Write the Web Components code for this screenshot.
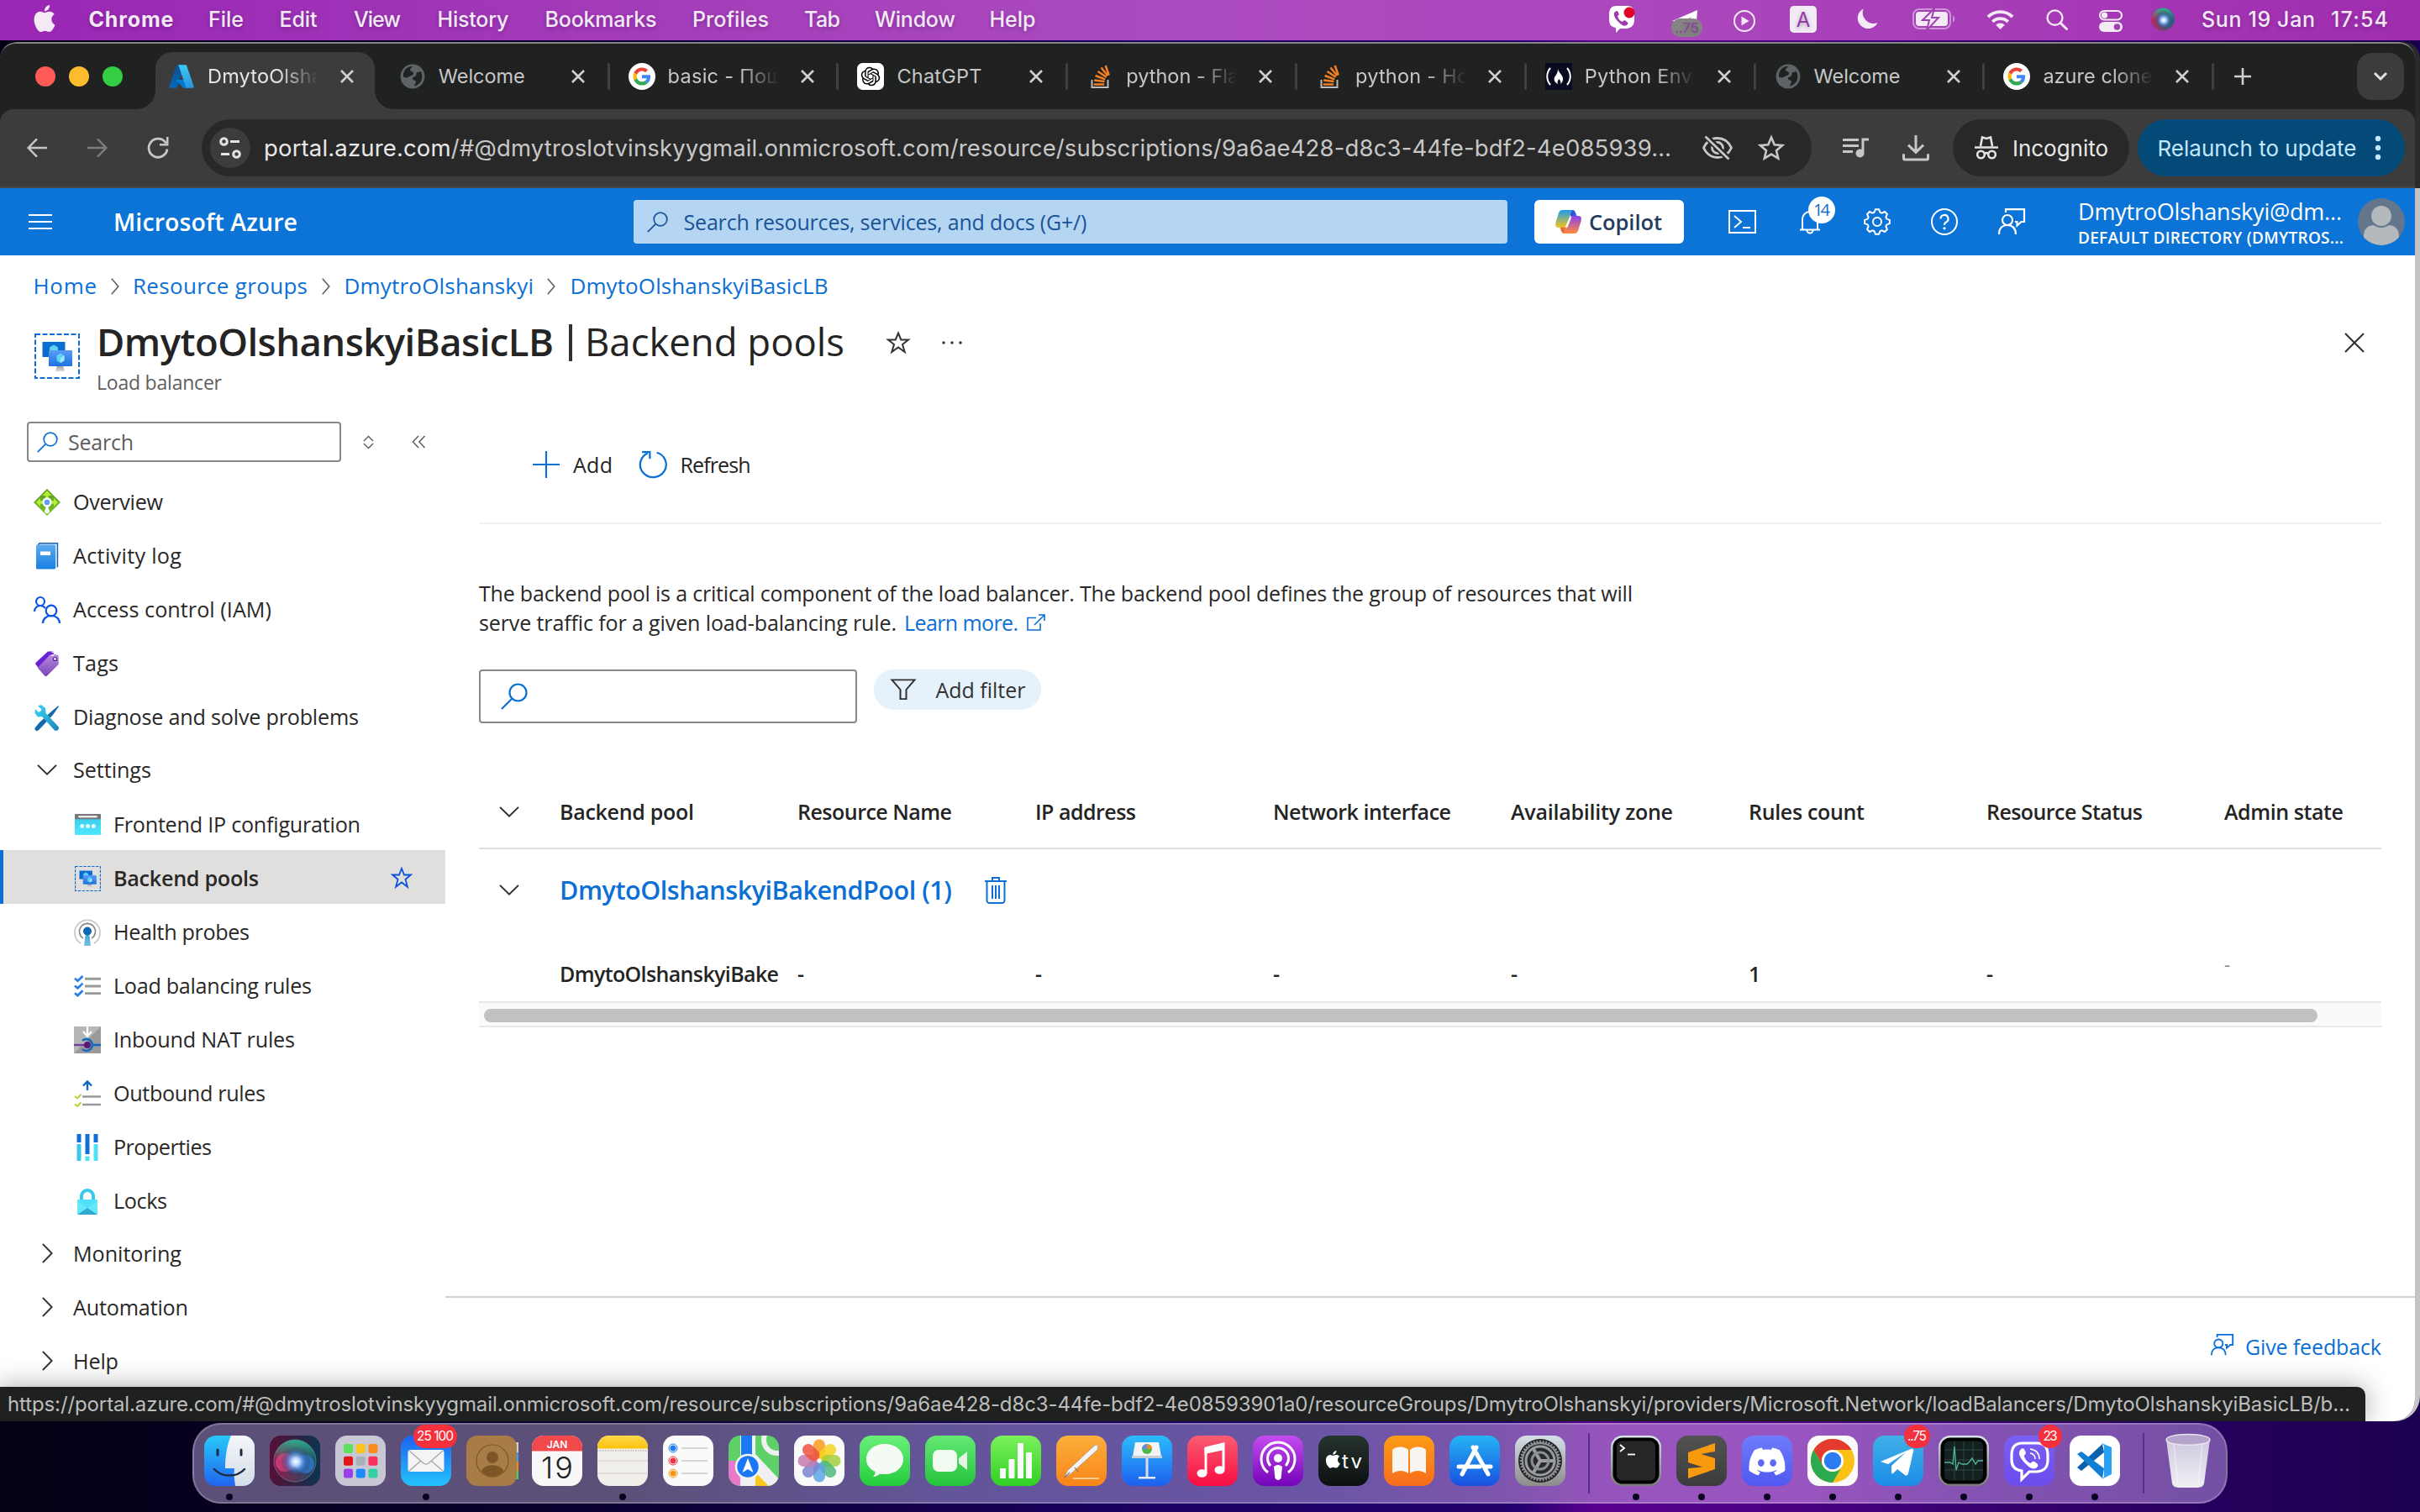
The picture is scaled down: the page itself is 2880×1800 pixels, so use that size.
<!DOCTYPE html>
<html lang="en">
<head>
<meta charset="utf-8">
<title>DmytoOlshanskyiBasicLB - Microsoft Azure</title>
<style>
html,body{margin:0;padding:0;width:2880px;height:1800px;overflow:hidden;background:#14003c}
</style>
</head>
<body>
<mac-desktop></mac-desktop>
<script>
const SANS = '"Open Sans","Noto Sans",sans-serif';
const SYS = 'Inter,Roboto,sans-serif';

/* ---------- helpers ---------- */
const define = (tag, css, html, ready) => customElements.define(tag, class extends HTMLElement {
  constructor() { super(); this.attachShadow({ mode: 'open' }); }
  connectedCallback() {
    this.shadowRoot.innerHTML = `<style>:host{display:block;box-sizing:border-box}*{box-sizing:border-box}${css}</style>` +
      (typeof html === 'function' ? html(this) : html);
    if (ready) ready(this);
  }
});
const T = (text, w, size, extra = '') => `<ui-text w="${w}" size="${size}" style="${extra}">${text}</ui-text>`;
const I = (name, w, h = w, extra = '') => `<ui-icon name="${name}" w="${w}" h="${h}" style="${extra}"></ui-icon>`;
/* lays items out in a flex row; each item is [left, width, markup] */
const row = (start, items) => { let at = start; return items.map(([x, w, m]) => {
  const gap = x - at; at = x + w;
  return `<div style="flex:none;display:flex;align-items:center;justify-content:center;width:${w}px;margin-left:${gap}px">${m}</div>`; }).join(''); };
const cog = (c, ro, ri, n, t = .5) => { let p = []; for (let i = 0; i < n; i++) { const a = i * 2 * Math.PI / n, s = Math.PI / n;
  for (const [r, o] of [[ri, -s * (t + .25)], [ro, -s * t * .7], [ro, s * t * .7], [ri, s * (t + .25)]]) p.push((c + r * Math.sin(a + o)).toFixed(2) + ' ' + (c - r * Math.cos(a + o)).toFixed(2)); }
  return 'M' + p.join('L') + 'Z'; };
const lg = (id, a, b, x2 = 0, y2 = 1) => `<linearGradient id="${id}" x1="0" y1="0" x2="${x2}" y2="${y2}"><stop stop-color="${a}"/><stop offset="1" stop-color="${b}"/></linearGradient>`;
const tile = (a, b, inner) => `<defs>${lg('t', a, b)}</defs><rect width="60" height="60" rx="14" fill="url(#t)"/>${inner}`;

/* ---------- icon library: [viewBox, markup] ---------- */
const APPLE = 'M12.152 6.896c-.948 0-2.415-1.078-3.96-1.04-2.04.027-3.91 1.183-4.961 3.014-2.117 3.675-.546 9.103 1.519 12.09 1.013 1.454 2.208 3.09 3.792 3.039 1.52-.065 2.09-.987 3.935-.987 1.831 0 2.35.987 3.96.948 1.637-.026 2.676-1.48 3.676-2.948 1.156-1.688 1.636-3.325 1.662-3.415-.039-.013-3.182-1.221-3.22-4.857-.026-3.04 2.48-4.494 2.597-4.559-1.429-2.09-3.623-2.324-4.39-2.376-2-.156-3.675 1.09-4.61 1.09zM15.53 3.83c.843-1.012 1.4-2.427 1.245-3.83-1.207.052-2.662.805-3.532 1.818-.78.896-1.454 2.338-1.273 3.714 1.338.104 2.715-.688 3.559-1.701';
const PHONE = 'M9 8c2-2 3-1 4 1s1 3-1 4c1 4 3 6 6 7 1-2 3-2 4-1 3 2 3 3 1 5-3 2-6 0-10-4S6 11 9 8z';
const siri = r => `<defs><radialGradient id="a" cx=".5" cy=".5" r=".5"><stop stop-color="#fff"/><stop offset=".25" stop-color="#b7d8ff"/><stop offset=".6" stop-color="#3a7bd0" stop-opacity=".6"/><stop offset="1" stop-color="#223" stop-opacity="0"/></radialGradient>${lg('b', '#d3245c', '#1b6f7c', 1, 0)}<linearGradient id="c" x1="0" y1="0" x2="0" y2="1"><stop stop-color="#20c997" stop-opacity=".8"/><stop offset=".5" stop-color="#20c997" stop-opacity="0"/></linearGradient></defs>`;
const ICONS = {
  apple: ['1 0 22 24', `<path fill="#f3eaf6" d="${APPLE}"/>`],
  mviber: ['0 0 32 32', `<path fill="#fff" d="M10 0h12c6 0 9 3 9 10v6c0 7-3 10-9 11h-8l-5 5v-6c-6-1-8-4-8-10v-6C1 3 4 0 10 0z"/><path fill="#a03ab0" d="${PHONE}" transform="translate(-1 -1)"/><circle cx="25" cy="8" r="6.5" fill="#e00028"/>`],
  mtg: ['0 0 38 34', `<path fill="#fff" d="M1 14 31 1l-1 14H18l6-6-12 7z"/><rect x="0" y="11" width="37" height="22" rx="11" fill="#858585"/><text x="18.5" y="28" text-anchor="middle" font-family="Inter" font-size="16.500" fill="#8c3f9c">..75</text>`],
  mplay: ['0 0 26 26', `<circle cx="13" cy="13" r="12" fill="none" stroke="#f3eaf6" stroke-width="2"/><path d="M9.500 7.500v11l9-5.500z" fill="#f3eaf6"/>`],
  minput: ['0 0 32 32', `<rect width="32" height="32" rx="5" fill="#f3eaf6"/><text x="16" y="24.500" text-anchor="middle" font-family="Inter" font-size="24" fill="#923aa5">A</text>`],
  mmoon: ['0 0 26 26', `<path fill="#f3eaf6" d="M8.500.5A12.500 12.500 0 1 0 25.500 17 13 13 0 0 1 8.500.5z"/>`],
  mbattery: ['0 0 52 26', `<rect x="1" y="1" width="44" height="23" rx="7" fill="none" stroke="#f3eaf6" stroke-opacity=".5" stroke-width="2"/><rect x="4" y="4" width="38" height="17" rx="4" fill="#f3eaf6"/><path d="M48 8.500c3 1 3 7 0 8z" fill="#f3eaf6" fill-opacity=".5"/><path d="M26 0 12 14h8l-3 12 14-15h-8z" fill="#f3eaf6" stroke="#a33fb5" stroke-width="2"/>`],
  mwifi: ['0 0 34 25', `<g fill="none" stroke="#f3eaf6" stroke-width="4"><path d="M2 9.500a21 21 0 0 1 30 0"/><path d="M7.500 15.500a13.500 13.500 0 0 1 19 0"/></g><path d="M11.500 19.500a8 8 0 0 1 11 0L17 25z" fill="#f3eaf6"/>`],
  msearch: ['0 0 26 26', `<circle cx="10.500" cy="10.500" r="9" fill="none" stroke="#f3eaf6" stroke-width="2.400"/><path d="m17 17 7.500 7.500" stroke="#f3eaf6" stroke-width="3" stroke-linecap="round"/>`],
  mcontrol: ['0 0 28 26', `<rect x="1" y="1" width="26" height="10.500" rx="5.200" fill="none" stroke="#f3eaf6" stroke-width="2"/><circle cx="6.500" cy="6.200" r="3.600" fill="#f3eaf6"/><rect y="14" width="28" height="12" rx="6" fill="#f3eaf6"/><circle cx="21.500" cy="20" r="3.800" fill="#a33fb5"/>`],
  msiri: ['0 0 28 28', siri() + `<circle cx="14" cy="14" r="13.500" fill="#2a3a6a"/><circle cx="14" cy="14" r="13.500" fill="url(#b)" opacity=".9"/><circle cx="14" cy="14" r="13.500" fill="url(#c)"/><circle cx="15" cy="15" r="11" fill="url(#a)"/>`],

  azure: ['0 0 96 96', `<defs>${lg('a', '#114a8b', '#0669bc')}${lg('b', '#3ccbf4', '#2892df')}</defs><path fill="url(#a)" d="M33.300 6.500h26L32.300 86.500a4 4 0 0 1-4 3H8A4 4 0 0 1 4.200 84L29.400 9.300a4 4 0 0 1 4-2.800z"/><path fill="#0078d4" d="M71.200 60.300H29.900a2 2 0 0 0-1.300 3.300l26.600 24.800a4 4 0 0 0 2.800 1.100h23.400z"/><path fill="url(#b)" d="M66.600 9.400a4 4 0 0 0-4-2.800h-29a4 4 0 0 1 4 2.800L62.800 84a4 4 0 0 1-4 5.500h29a4 4 0 0 0 4-5.500z"/>`],
  globe: ['0 0 30 30', `<circle cx="15" cy="15" r="14.500" fill="#5f6368"/><path fill="#202221" d="M5 9c2-4 6-6 10-6-1 2-3 2-3 4 0 3 4 1 4 4s-3 3-5 4-2 2-6 1C3 15 4 11 5 9zm16 1c2 0 3-1 4-1 2 4 2 8 0 12-2 3-5 5-8 5.500 0-2 2-3 2-5 0-3-4-1-4-4 0-2 3-2 4-3.500s0-4 2-4z"/>`],
  google: ['-16 -16 80 80', `<circle cx="24" cy="24" r="40" fill="#fff"/><g transform="translate(-2.500 -2.500) scale(1.100)"><path fill="#EA4335" d="M24 9.500c3.540 0 6.710 1.220 9.210 3.600l6.850-6.850C35.900 2.380 30.470 0 24 0 14.620 0 6.510 5.380 2.560 13.220l7.980 6.190C12.430 13.720 17.740 9.500 24 9.500z"/><path fill="#4285F4" d="M46.980 24.550c0-1.570-.15-3.090-.38-4.550H24v9.020h12.940c-.58 2.960-2.260 5.480-4.780 7.180l7.730 6c4.510-4.180 7.090-10.360 7.090-17.650z"/><path fill="#FBBC05" d="M10.530 28.590c-.48-1.450-.76-2.990-.76-4.590s.27-3.140.76-4.590l-7.980-6.190C.92 16.460 0 20.120 0 24c0 3.880.92 7.540 2.560 10.780l7.970-6.190z"/><path fill="#34A853" d="M24 48c6.480 0 11.930-2.130 15.890-5.810l-7.730-6c-2.150 1.450-4.920 2.300-8.160 2.300-6.260 0-11.570-4.220-13.470-9.910l-7.980 6.190C6.510 42.620 14.620 48 24 48z"/></g>`],
  gpt: ['-5 -5 34 34', `<rect x="-5" y="-5" width="34" height="34" rx="7" fill="#fff"/><path d="M22.2819 9.8211a5.9847 5.9847 0 0 0-.5157-4.9108 6.0462 6.0462 0 0 0-6.5098-2.9A6.0651 6.0651 0 0 0 4.9807 4.1818a5.9847 5.9847 0 0 0-3.9977 2.9 6.0462 6.0462 0 0 0 .7427 7.0966 5.98 5.98 0 0 0 .511 4.9107 6.051 6.051 0 0 0 6.5146 2.9001A5.9847 5.9847 0 0 0 13.2599 24a6.0557 6.0557 0 0 0 5.7718-4.2058 5.9894 5.9894 0 0 0 3.9977-2.9001 6.0557 6.0557 0 0 0-.7475-7.0729zm-9.022 12.6081a4.4755 4.4755 0 0 1-2.8764-1.0408l.1419-.0804 4.7783-2.7582a.7948.7948 0 0 0 .3927-.6813v-6.7369l2.02 1.1686a.071.071 0 0 1 .038.052v5.5826a4.504 4.504 0 0 1-4.4945 4.4944zm-9.6607-4.1254a4.4708 4.4708 0 0 1-.5346-3.0137l.142.0852 4.783 2.7582a.7712.7712 0 0 0 .7806 0l5.8428-3.3685v2.3324a.0804.0804 0 0 1-.0332.0615L9.74 19.9502a4.4992 4.4992 0 0 1-6.1408-1.6464zM2.3408 7.8956a4.485 4.485 0 0 1 2.3655-1.9728V11.6a.7664.7664 0 0 0 .3879.6765l5.8144 3.3543-2.0201 1.1685a.0757.0757 0 0 1-.071 0l-4.8303-2.7865A4.504 4.504 0 0 1 2.3408 7.872zm16.5963 3.8558L13.1038 8.364 15.1192 7.2a.0757.0757 0 0 1 .071 0l4.8303 2.7913a4.4944 4.4944 0 0 1-.6765 8.1042v-5.6772a.79.79 0 0 0-.407-.667zm2.0107-3.0231l-.142-.0852-4.7735-2.7818a.7759.7759 0 0 0-.7854 0L9.409 9.2297V6.8974a.0662.0662 0 0 1 .0284-.0615l4.8303-2.7866a4.4992 4.4992 0 0 1 6.6802 4.66zM8.3065 12.863l-2.02-1.1638a.0804.0804 0 0 1-.038-.0567V6.0742a4.4992 4.4992 0 0 1 7.3757-3.4537l-.142.0805L8.704 5.459a.7948.7948 0 0 0-.3927.6813zm1.0976-2.3654l2.602-1.4998 2.6069 1.4998v2.9994l-2.5974 1.4997-2.6067-1.4997Z"/>`],
  stack: ['0 0 32 32', `<path d="M6.500 20v9h19v-9" fill="none" stroke="#bcbbbb" stroke-width="2"/><g stroke="#f48024" stroke-width="2.500"><path d="M9.500 25.500h12.500M10 20.500l12.300 1.500M11.400 15l11.600 4.300M14.300 10l10.200 6.800M18.300 5.500l7.700 9.500M23.500 3l4 11.500" transform="translate(-.8 0)"/></g>`],
  fcc: ['0 0 32 32', `<rect width="32" height="32" fill="#0a0a23"/><g fill="none" stroke="#fff" stroke-width="2"><path d="M6 6c-5 6-5 14 0 20M26 6c5 6 5 14 0 20"/></g><path fill="#fff" d="M15 7c1 5 7 8 6 13-.5 3-2 4-3 5 1-3 0-4-2-6-1 3-2 3-1 6-4-2-5-5-4-8 1-2 4-4 4-10z"/>`],
  close: ['0 0 18 18', `<path d="m2 2 14 14M16 2 2 16" stroke="currentColor" stroke-width="2.600"/>`],
  plus: ['0 0 20 20', `<path d="M10 0v20M0 10h20" stroke="currentColor" stroke-width="2.600"/>`],
  down: ['0 0 16 10', `<path d="m1 1 7 7 7-7" fill="none" stroke="currentColor" stroke-width="3"/>`],
  back: ['0 0 26 26', `<path d="M13 1.500 1.800 13 13 24.500M2 13h24" fill="none" stroke="currentColor" stroke-width="2.600"/>`],
  fwd: ['0 0 26 26', `<path d="M13 1.500 24.200 13 13 24.500M24 13H0" fill="none" stroke="currentColor" stroke-width="2.600"/>`],
  reload: ['0 0 26 26', `<path d="M22.500 7.500A11 11 0 1 0 24 14.500" fill="none" stroke="currentColor" stroke-width="2.800"/><path d="M25.500 0v10.500H15V8h8V0z" fill="currentColor"/>`],
  tune: ['0 0 26 26', `<g fill="none" stroke="#e3e3e3" stroke-width="3"><circle cx="5.500" cy="5.500" r="3.800"/><path d="M13 5.500h11M2 20.500h10"/><circle cx="20.500" cy="20.500" r="3.800"/></g>`],
  eyeoff: ['0 0 38 30', `<g fill="none" stroke="currentColor" stroke-width="2.800"><path d="M2.500 15C6 7.500 12 3.500 19 3.500S32 7.500 35.500 15C32 22.500 26 26.500 19 26.500S6 22.500 2.500 15z"/><circle cx="19" cy="15" r="6.500"/></g><path d="M5 1 33 29" stroke="#282828" stroke-width="7"/><path d="m4.500 1.500 28 27" stroke="currentColor" stroke-width="2.800"/>`],
  bmstar: ['0 0 32 32', `<path d="m16 3.500 3.700 8.800 9.500.8-7.200 6.200 2.200 9.300-8.200-5-8.200 5L10 19.300l-7.200-6.200 9.500-.8z" fill="none" stroke="currentColor" stroke-width="2.600"/>`],
  queue: ['0 0 31 24', `<path d="M0 2.500h19M0 9.500h19M0 16.500h12" stroke="currentColor" stroke-width="2.800"/><path d="M24 18V2h7" fill="none" stroke="currentColor" stroke-width="3"/><circle cx="20.500" cy="18.500" r="5" fill="currentColor"/>`],
  download: ['0 0 32 32', `<path d="M16 0v20M7 12l9 9 9-9" fill="none" stroke="currentColor" stroke-width="3"/><path d="M1.500 23v5a2 2 0 0 0 2 2h25a2 2 0 0 0 2-2v-5" fill="none" stroke="currentColor" stroke-width="3"/>`],
  incognito: ['0 0 28 28', `<g fill="none" stroke="#e3e3e3" stroke-width="2.600"><path d="M7 12 9 1.500l5 1.500 5-1.500L21 12M0 13.500h28"/><circle cx="7.500" cy="22" r="4.300"/><circle cx="20.500" cy="22" r="4.300"/><path d="M11.500 21c1.500-1 3.500-1 5 0"/></g>`],
  dots: ['0 0 8 30', `<g fill="#c2e7ff"><circle cx="4" cy="4" r="3.200"/><circle cx="4" cy="15" r="3.200"/><circle cx="4" cy="26" r="3.200"/></g>`],

  burger: ['0 0 28 18', `<path d="M0 1h28M0 9h28M0 17h28" stroke="#fff" stroke-width="2"/>`],
  search: ['0 0 32 32', `<circle cx="20.500" cy="11.500" r="10" fill="none" stroke="currentColor" stroke-width="2.200"/><path d="M13.500 18.500 1 31" stroke="currentColor" stroke-width="2.200"/>`],
  copilot: ['0 0 32 30', `<defs>${lg('a', '#1a9bf0', '#f5c518')}${lg('b', '#8a3ff0', '#ff8a3a')}${lg('c', '#1d3fd6', '#3b63e8', 1, 0)}${lg('d', '#e8522e', '#f7a04a', 1, 0)}</defs><path fill="url(#c)" d="M16 0h5c2 0 3 1 4 4l1.500 4H19z"/><path fill="url(#a)" d="M9 0h13c-2 1-2.600 3-3.200 5l-4 13c-.8 3-2 4.500-5 4.500H4c-4 0-4.500-3-3.500-7L4 4c1-3 2.500-4 5-4z"/><path fill="url(#d)" d="M16 30h-5c-2 0-3-1-4-4l-1-3.500 7-1z"/><path fill="url(#b)" d="M23 30H10c2-1 2.600-3 3.200-5l4-13c.8-3 2-4.500 5-4.500H28c4 0 4.500 3 3.500 7L28 26c-1 3-2.500 4-5 4z"/><path fill="#fff" d="M17.500 9h2.500l-5 13h-3z" opacity=".9"/>`],
  shell: ['0 0 33 28', `<rect x="1" y="1" width="31" height="26" fill="none" stroke="#fff" stroke-width="2"/><path d="m7 7 8 7-8 7M17 21h9" fill="none" stroke="#fff" stroke-width="2"/>`],
  bell: ['0 0 26 28', `<path d="M1 23.500h24M4 23.500V11a9 9 0 0 1 18 0v12.500M9.500 24a3.500 3.500 0 0 0 7 0" fill="none" stroke="#fff" stroke-width="2"/>`],
  gear: ['0 0 32 32', `<path d="${cog(16, 15, 11.800, 8)}" fill="none" stroke="#fff" stroke-width="2"/><circle cx="16" cy="16" r="5" fill="none" stroke="#fff" stroke-width="2"/>`],
  help: ['0 0 32 32', `<circle cx="16" cy="16" r="15" fill="none" stroke="#fff" stroke-width="2"/><path d="M11.500 12.500a4.500 4.500 0 1 1 6.500 4c-1.600.8-2 1.700-2 3.500" fill="none" stroke="#fff" stroke-width="2.200"/><circle cx="16" cy="23.800" r="1.600" fill="#fff"/>`],
  feedback: ['0 0 32 32', `<g fill="none" stroke="currentColor" stroke-width="2.200"><circle cx="11" cy="14" r="6"/><path d="M1 31c0-7 4-11 10-11s10 4 10 11"/><path d="M9 5V1.200h22V16h-3.500L22.500 20.500V16H20"/></g>`],
  avatar: ['0 0 56 56', `<defs><clipPath id="c"><circle cx="28" cy="28" r="28"/></clipPath></defs><g clip-path="url(#c)"><rect width="56" height="56" fill="#64768c"/><circle cx="28" cy="21" r="12" fill="#b4b9be"/><path d="M7 58V45c0-8 5-13 12-13 5 4 13 4 18 0 7 0 12 5 12 13v13z" fill="#b4b9be"/></g>`],

  crumb: ['0 0 10 20', `<path d="m.8.8 8 9.200-8 9.200" fill="none" stroke="#605e5c" stroke-width="1.600"/>`],
  chevR: ['0 0 14 24', `<path d="m1 1 11.500 11L1 23" fill="none" stroke="#323130" stroke-width="2"/>`],
  chevD: ['0 0 24 14', `<path d="m1 1 11 11.500L23 1" fill="none" stroke="#323130" stroke-width="2"/>`],
  favstar: ['0 0 28 28', `<path d="m14 2.500 3.300 8h8.700l-7 5.500 2.700 9-7.700-5.500L6.300 25 9 16l-7-5.500h8.700z" fill="none" stroke="currentColor" stroke-width="2"/>`],
  more: ['0 0 24 6', `<g fill="#323130"><circle cx="2" cy="3" r="1.700"/><circle cx="12" cy="3" r="1.700"/><circle cx="22" cy="3" r="1.700"/></g>`],
  x: ['0 0 24 24', `<path d="m1 1 22 22M23 1 1 23" stroke="#323130" stroke-width="2"/>`],
  sort: ['0 0 14 18', `<path d="m1 7.500 6-6 6 6M1 10.500l6 6 6-6" fill="none" stroke="#605e5c" stroke-width="1.500"/>`],
  collapse: ['0 0 18 16', `<path d="M8.500 1 1.500 8l7 7M16.500 1l-7 7 7 7" fill="none" stroke="#605e5c" stroke-width="1.600"/>`],
  add: ['0 0 32 32', `<path d="M16 0v32M0 16h32" stroke="#0b6fd6" stroke-width="2.200"/>`],
  refresh: ['0 0 32 32', `<path d="M20 1.700A15 15 0 1 1 9.500 2.500" fill="none" stroke="#0b6fd6" stroke-width="2.200"/><path d="M3 1.200h9v8" fill="none" stroke="#0b6fd6" stroke-width="2.200"/>`],
  ext: ['0 0 22 20', `<path d="M11 4.500H1V19h15V11M14 1h7v7M21 1 9 13" fill="none" stroke="#0b6fd6" stroke-width="1.600"/>`],
  filter: ['0 0 30 28', `<path d="M1.500 1.500h27l-10 12.500v12h-7V14z" fill="none" stroke="#323130" stroke-width="2"/>`],
  trash: ['0 0 26 32', `<path d="M0 5h26M9 5V1h8v4M2.500 5v23a3 3 0 0 0 3 3h15a3 3 0 0 0 3-3V5M9 10v16M13 10v16M17 10v16" fill="none" stroke="#0b6fd6" stroke-width="2"/>`],

  pool: ['0 0 54 54', `<defs>${lg('a', '#0b6fd6', '#0a67cc')}${lg('b', '#5a9cf5', '#1d72e2')}${lg('s', '#9a9a9a', '#dcdcdc')}</defs><rect x="1" y="1" width="52" height="52" fill="none" stroke="#0b6fd6" stroke-width="2" stroke-dasharray="6 2.500"/><rect x="9.500" y="10" width="27" height="18" fill="url(#a)"/><path d="m23 13.500 5 3V20h-5v5l-5-3v-5.500z" fill="#5fd3f3"/><path d="M27 38h7l2 7H25z" fill="url(#s)"/><rect x="17" y="20" width="28" height="19" rx="1" fill="url(#b)"/><path d="m31 23.500 4.500 2.700v6L31 35l-4.500-2.800v-6z" fill="#5fd3f3"/><path d="m31 29.500 4.500-3v5.700L31 35z" fill="#9febff"/>`],
  overview: ['0 0 32 32', `<defs>${lg('a', '#5a9a20', '#7cc22c')}</defs><path d="M16 0 32 16 16 32 0 16z" fill="url(#a)"/><g fill="#b4ec36"><path d="m16 2 5.500 6h-3.800v5h-3.400V8h-3.800zM3 16l5-5v3.300h4v3.400H8V21zM29 16l-5-5v3.300h-4v3.400h4V21z"/></g><path d="M14.300 20h3.400v4a3 3 0 1 1-3.400 0z" fill="#fff"/><circle cx="16" cy="16" r="4.500" fill="#5ea0ef" stroke="#fff" stroke-width="2.400"/>`],
  activity: ['0 0 32 32', `<defs>${lg('a', '#5aacf0', '#1a7fe0')}</defs><path d="M6 2.500 8 1h20.500v28l-2 2H6z" fill="#cfe6f8"/><path d="M5 3 7 .8h21.500v28.500" fill="none" stroke="#1a5fa8" stroke-width="1.400"/><rect x="3" y="2.500" width="23" height="29" rx="1.500" fill="url(#a)"/><rect x="8" y="10.500" width="12" height="4.500" fill="#fff"/>`],
  iam: ['0 0 32 32', `<g fill="none" stroke="#0a55e0" stroke-width="2.200"><circle cx="8" cy="6" r="5"/><path d="M1 18c0-4 3-7 7-7 3 0 4.500 1 6 3"/><circle cx="21" cy="17" r="6.300"/><path d="M11 32c0-5 4-9 10-9s10 4 10 9"/></g>`],
  tags: ['0 0 32 32', `<defs>${lg('a', '#b98ae0', '#7a45b5')}</defs><path d="M17 1.500h6.500L26 6v6L8 24 2.500 17c-.6-1 0-2 .5-2.500z" fill="#6b20d8"/><path d="M19.500 5.500h8.200c1.200 0 2 .8 2 2v9.500L16 30.500c-1 1-2 1-2.800 0L6 22.500c-1-1-.8-2 0-2.800z" fill="url(#a)"/><circle cx="25.500" cy="10.500" r="2" fill="#fff" stroke="#4a1a90" stroke-width="1.200"/><path d="M21.500 2.500a2 2 0 1 1-.5 3" fill="none" stroke="#fff" stroke-width="1.300"/>`],
  diagnose: ['0 0 32 32', `<defs>${lg('a', '#3cd4f4', '#1a86b8', 1, 1)}</defs><path d="m29.500 2 .5 1-7 10-12 13-5 5a2.300 2.300 0 0 1-4-3l5-6L20 10z" fill="#1569ae"/><path d="M5 2.500 9 1l5 4 .5 6L29 26.500a3 3 0 0 1-4.500 4.500L10 15l-5 .5L1.500 11l.5-5 4 4 3.500-2.500L9 6z" fill="url(#a)"/>`],
  frontend: ['0 0 32 26', `<defs>${lg('a', '#35c8e8', '#50e6ff')}</defs><rect width="32" height="26" rx="1" fill="url(#a)"/><rect width="32" height="6.500" rx="1" fill="#767676"/><rect x="4.500" y="2.200" width="23" height="2.300" fill="#f2f2f2"/><g fill="#e8fbff"><circle cx="9" cy="15" r="2.600"/><circle cx="16" cy="15" r="2.600"/><circle cx="23" cy="15" r="2.600"/></g>`],
  probes: ['0 0 32 32', `<defs>${lg('a', '#3a9fd8', '#76c0e0')}</defs><path d="M14 16h4l2 16h-8z" fill="url(#a)"/><g fill="none" stroke-width="1.700"><path d="M8 29A15 15 0 1 1 24 29" stroke="#c8c8c8"/><path d="M11 23a9.500 9.500 0 1 1 10 0" stroke="#8a8a8a"/></g><circle cx="16" cy="14.500" r="5" fill="#1068b8"/>`],
  lbrules: ['0 0 32 28', `<g fill="none" stroke-width="2.800"><path d="m1 5 3.500 3L10.500 2M1 14l3.500 3 6-6M1 23l3.500 3 6-6" stroke="#2d7fe8"/><path d="M13 5.500h19M13 14.500h19M13 23.500h19" stroke="#9a9a9a" stroke-width="3"/></g>`],
  nat: ['0 0 32 32', `<path d="M0 0h32v32H0z" fill="#98999b"/><path d="M0 0h32L0 32z" fill="#b5b6b8"/><path d="M16 0v11M11 6l5 5.500L21 6" fill="none" stroke="#fff" stroke-width="2.200"/><path d="M0 22h14" stroke="#7a3a9a" stroke-width="2.400"/><path d="M10 27a7 7 0 1 0 0-10M23 22h9" fill="none" stroke="#1068c0" stroke-width="2.400"/><circle cx="16" cy="22" r="4" fill="#5a1a7a"/>`],
  outbound: ['0 0 32 32', `<path d="M16 12V2M11 6.500 16 1.500l5 5" fill="none" stroke="#1068c0" stroke-width="2.400"/><path d="m1 19 3 2.500L8.500 17M1 28.500 4 31l4.500-4.500" fill="none" stroke="#b4d334" stroke-width="2"/><path d="M10 19.500h22M10 29h22" stroke="#9a9a9a" stroke-width="2.400"/>`],
  props: ['0 0 32 32', `<g><rect x="3.500" y="0" width="5" height="10" fill="#1070d8"/><rect x="3.500" y="12" width="5" height="20" fill="#40c8e8"/><rect x="13.500" y="0" width="5" height="24" fill="#1070d8"/><rect x="13.500" y="26.500" width="5" height="5.500" fill="#50e0f8"/><rect x="23.500" y="0" width="5" height="10" fill="#1070d8"/><rect x="23.500" y="12" width="5" height="20" fill="#50e0f8"/></g>`],
  lock: ['0 0 32 32', `<path d="M9 16V10a7 7 0 0 1 14 0v6" fill="none" stroke="#38c8ec" stroke-width="4"/><rect x="4" y="14" width="24" height="18" rx="1.500" fill="#50e0f8"/><path d="m4 15 12 9L4 32zM28 15l-12 9 12 8z" fill="#66e8fb"/><path d="m4 32 12-8 12 8z" fill="#30a8d0"/>`],

  finder: ['0 0 60 60', `<defs>${lg('a', '#28c8fa', '#1f66f0')}${lg('b', '#f4f6fa', '#d4dde8')}<clipPath id="c"><rect width="60" height="60" rx="14"/></clipPath></defs><g clip-path="url(#c)"><rect width="60" height="60" fill="url(#a)"/><path d="M32 0h28v60H37c-1-7-2-14-1-21h-11c0-14 2-28 7-39z" fill="url(#b)"/></g><path d="M16 17v6M44 17v6" stroke="#1d2c45" stroke-width="3" stroke-linecap="round"/><path d="M12 40c9 10 27 10 36 0" fill="none" stroke="#1d2c45" stroke-width="2.400" stroke-linecap="round"/>`],
  siri: ['0 0 60 60', siri() + `<defs>${lg('k', '#6a0a3a', '#0a3a5a', 1, 0)}</defs><rect width="60" height="60" rx="14" fill="#10202c"/><rect width="60" height="60" rx="14" fill="url(#k)" opacity=".8"/><circle cx="30" cy="30" r="25" fill="url(#b)" opacity=".5" stroke="#9aa8b8" stroke-width="1"/><circle cx="30" cy="30" r="25" fill="url(#c)"/><circle cx="18" cy="32" r="11" fill="#f04a90" opacity=".6"/><circle cx="42" cy="34" r="11" fill="#2f8af0" opacity=".6"/><circle cx="31" cy="31" r="18" fill="url(#a)"/>`],
  launchpad: ['0 0 60 60', `<rect width="60" height="60" rx="14" fill="#c8c8d4"/>` + ['#5fe05a', '#fbc41c', '#fb8c1c', '#e2141c', '#a8b0b8', '#fb2f5c', '#9a3fe8', '#1c8afb', '#35cfa4'].map((c, i) => `<rect x="${10 + (i % 3) * 14.700}" y="${10 + Math.floor(i / 3) * 14.700}" width="11" height="11" rx="2.500" fill="${c}"/>`).join('')],
  mail: ['0 0 60 60', tile('#1e62f2', '#24c2fb', `<rect x="8.500" y="17" width="43" height="26" rx="3" fill="#f4f4f4"/><path d="m10 18 17 15q3 2 6 0l17-15M10 42l14-12M50 42 36 30" fill="none" stroke="#a8a8a8" stroke-width="1.400"/>`)],
  contacts: ['0 0 60 60', `<rect x="48" y="8" width="14" height="12" fill="#cfcfcf"/><rect x="48" y="20" width="14" height="11" fill="#3aa0f0"/><rect x="48" y="31" width="14" height="11" fill="#f08a1c"/><rect x="48" y="42" width="14" height="10" fill="#4cd05c"/><rect width="60" height="60" rx="13" fill="#a87c46"/><circle cx="31" cy="30" r="19" fill="none" stroke="#7c5626" stroke-width="1.200"/><circle cx="31" cy="26" r="7" fill="#7c5626"/><path d="M18 42c3-9 23-9 26 0-7 9-19 9-26 0z" fill="#7c5626"/>`],
  calendar: ['0 0 60 60', `<defs><clipPath id="c"><rect width="60" height="60" rx="14"/></clipPath></defs><g clip-path="url(#c)"><rect width="60" height="60" fill="#f8f8f8"/><rect width="60" height="18.500" fill="#f2494c"/></g><text x="30" y="14.500" text-anchor="middle" font-family="Inter" font-weight="600" font-size="12" fill="#fff">JAN</text><text x="30" y="50.500" text-anchor="middle" font-family="Inter" font-weight="300" font-size="36" fill="#222" textLength="38">19</text>`],
  notes: ['0 0 60 60', `<defs>${lg('n', '#fbd94a', '#fbc20c')}<clipPath id="c"><rect width="60" height="60" rx="14"/></clipPath></defs><g clip-path="url(#c)"><rect width="60" height="60" fill="#f1efe9"/><rect width="60" height="15.500" fill="url(#n)"/><path d="M0 18h60" stroke="#b8b8b8" stroke-width="1.400" stroke-dasharray="1.500 1.500"/><path d="M0 30h60M0 45h60" stroke="#d2cfc8" stroke-width="1.200"/></g>`],
  reminders: ['0 0 60 60', `<rect width="60" height="60" rx="14" fill="#fafafa"/>` + ['#1c7cf0', '#f03440', '#f49414'].map((c, i) => `<circle cx="12" cy="${15 + i * 15}" r="5" fill="#fff" stroke="${c}" stroke-width="1"/><circle cx="12" cy="${15 + i * 15}" r="3.500" fill="${c}"/><path d="M22 ${15 + i * 15}h31" stroke="#c4c4c4" stroke-width="1.400"/>`).join('')],
  maps: ['0 0 60 60', `<defs><clipPath id="c"><rect width="60" height="60" rx="14"/></clipPath></defs><g clip-path="url(#c)"><rect width="60" height="60" fill="#5ed068"/><path d="M0 30h14v30H0z" fill="#e878c8"/><path d="M14 60V0h18v60z" fill="#f0f0f0"/><path d="M32 22 66 58v10H32z" fill="#f0f0f2"/><path d="M32 44 50 62H32z" fill="#fbc81c"/><path d="M15 0h13v30H15z" fill="#1a78f4"/><circle cx="58" cy="5" r="16" fill="none" stroke="#f0f0f0" stroke-width="6"/></g><circle cx="23" cy="37" r="14" fill="#1a78f4" stroke="#f4f4f4" stroke-width="2.500"/><path d="m23 27 6.500 17-6.500-4-6.500 4z" fill="#fff"/>`],
  photos: ['0 0 60 60', `<rect width="60" height="60" rx="14" fill="#fafafa"/>` + ['#f99a1c', '#f4d41c', '#a4cf3c', '#4cb87c', '#5ca4e4', '#7c84d0', '#c47cb0', '#f0503c'].map((c, i) => `<rect x="23" y="4.500" width="14" height="23" rx="7" fill="${c}" opacity=".85" transform="rotate(${i * 45} 30 30)"/>`).join('')],
  messages: ['0 0 60 60', tile('#6af07a', '#24cc3c', `<path d="M30 10c13 0 22 8 22 18S43 46 30 46c-2 0-4 0-6-.6-2 2-5 3.600-8 3.600 2-2 2.600-4 2.600-6C12 40 8 35 8 28c0-10 9-18 22-18z" fill="#f4fbf4"/>`)],
  facetime: ['0 0 60 60', tile('#64e874', '#24c43c', `<rect x="9" y="17" width="29" height="26" rx="7" fill="#f0faf0"/><path d="m40 27 10-8v22l-10-8z" fill="#e4f4e4"/>`)],
  numbers: ['0 0 60 60', tile('#7cf05c', '#30d024', `<g fill="#f8fcf8"><rect x="11" y="39" width="7" height="12" rx="1"/><rect x="21.500" y="28" width="7" height="23" rx="1"/><rect x="32" y="9" width="7" height="42" rx="1"/><rect x="42" y="20" width="7" height="31" rx="1"/></g>`)],
  pages: ['0 0 60 60', tile('#fbb03c', '#f98418', `<path d="M43 14q4-4 6-3t0 6L17 46l-7 4 3-8z" fill="#f6f4f0" stroke="#a88" stroke-width=".8"/><path d="m22 38 4 5M10 50l6-6" stroke="#776" stroke-width="1.200"/><path d="M20 51h31" stroke="#fcd49c" stroke-width="1.800"/>`)],
  keynote: ['0 0 60 60', tile('#2cbcfb', '#1c60f0', `<path d="M16 8h28l3 17H13z" fill="#f4f4f6"/><path d="M12 24h36v3H12z" fill="#c8ccd4"/><circle cx="30" cy="16" r="6" fill="#4cb84c"/><path d="M30 10a6 6 0 0 1 6 6h-6z" fill="#f08c1c"/><path d="M30 10v6h-6a6 6 0 0 1 6-6z" fill="#5c8cf0"/><path d="M30 27v23" stroke="#d8dce4" stroke-width="3"/><rect x="20" y="49" width="20" height="2.500" fill="#e8ecf0"/>`)],
  music: ['0 0 60 60', tile('#fb5c74', '#f80c40', `<path d="m22 15 21-5v30" fill="none" stroke="#fff" stroke-width="3"/><path d="M20.500 14 44 9v8l-23.500 5z" fill="#fff"/><path d="M22 15v30" stroke="#fff" stroke-width="3"/><ellipse cx="17.500" cy="45" rx="6" ry="4.800" fill="#fff"/><ellipse cx="38.500" cy="41" rx="6" ry="4.800" fill="#fff"/>`)],
  podcasts: ['0 0 60 60', tile('#c44cf0', '#7404b8', `<g fill="none" stroke="#fff" stroke-width="3"><path d="M18 44a20 20 0 1 1 24 0"/><path d="M21 36a12.500 12.500 0 1 1 18 0"/></g><circle cx="30" cy="27" r="5" fill="#fff"/><path d="M25 37q5-4 10 0l-1.500 14q-3.500 4-7 0z" fill="#fff"/>`)],
  tv: ['0 0 60 60', tile('#26342f', '#0c1010', `<path d="${APPLE}" fill="#fff" transform="translate(7 18) scale(.86)"/><text x="28" y="38.500" font-family="Inter" font-size="24" fill="#fff" textLength="24">tv</text>`)],
  books: ['0 0 60 60', tile('#fb9c14', '#f86c1c', `<path d="M10 17c6-5 15-4 19 0v28c-5-4-13-4-19 0zM50 17c-6-5-15-4-19 0v28c5-4 13-4 19 0z" fill="#f8f4f0"/>`)],
  appstore: ['0 0 60 60', tile('#24b4f4', '#1850e0', `<g stroke="#fff" stroke-width="5" stroke-linecap="round"><path d="M32 14 15 46M28 14l18 32" /><path d="M11 37h25M42 37h7"/></g>`)],
  settings: ['0 0 60 60', tile('#d4e0e8', '#8c8c88', `<circle cx="30" cy="30" r="26" fill="#222"/><path d="${cog(30, 24.500, 22, 40)}" fill="#8c9094"/><circle cx="30" cy="30" r="20" fill="#2a2a2c"/><circle cx="30" cy="30" r="17" fill="none" stroke="#9a9ea2" stroke-width="3"/><g stroke="#9a9ea2" stroke-width="4"><path d="M30 30h16M30 30l-8-14M30 30l-8 14"/></g><circle cx="30" cy="30" r="10" fill="none" stroke="#8a8e92" stroke-width="3"/>`)],
  terminal: ['0 0 60 60', `<defs>${lg('t', '#d8e4ea', '#7a7a76')}</defs><rect width="60" height="60" rx="14" fill="url(#t)"/><rect x="2.500" y="2.500" width="55" height="55" rx="11.500" fill="#000"/><rect x="7" y="6.500" width="46" height="47" rx="6" fill="#262628"/><path d="m11 11 5 4-5 4" fill="none" stroke="#fff" stroke-width="1.800"/><path d="M20 22.500h9" stroke="#fff" stroke-width="1.800"/>`],
  sublime: ['0 0 60 60', tile('#525252', '#3c3c3c', `<path d="m46 9-32 11v12l17 5.500L14 39v12l32-11V27l-17-5 17-3z" fill="#f99a0c"/>`)],
  discord: ['0 0 60 60', tile('#6f7cfb', '#5058f0', `<path transform="translate(8.500 9.500) scale(1.790)" fill="#fff" d="M20.317 4.3698a19.7913 19.7913 0 00-4.8851-1.5152.0741.0741 0 00-.0785.0371c-.211.3753-.4447.8648-.6083 1.2495-1.8447-.2762-3.68-.2762-5.4868 0-.1636-.3933-.4058-.8742-.6177-1.2495a.077.077 0 00-.0785-.037 19.7363 19.7363 0 00-4.8852 1.515.0699.0699 0 00-.0321.0277C.5334 9.0458-.319 13.5799.0992 18.0578a.0824.0824 0 00.0312.0561c2.0528 1.5076 4.0413 2.4228 5.9929 3.0294a.0777.0777 0 00.0842-.0276c.4616-.6304.8731-1.2952 1.226-1.9942a.076.076 0 00-.0416-.1057c-.6528-.2476-1.2743-.5495-1.8722-.8923a.077.077 0 01-.0076-.1277c.1258-.0943.2517-.1923.3718-.2914a.0743.0743 0 01.0776-.0105c3.9278 1.7933 8.18 1.7933 12.0614 0a.0739.0739 0 01.0785.0095c.1202.099.246.1981.3728.2924a.077.077 0 01-.0066.1276 12.2986 12.2986 0 01-1.873.8914.0766.0766 0 00-.0407.1067c.3604.698.7719 1.3628 1.225 1.9932a.076.076 0 00.0842.0286c1.961-.6067 3.9495-1.5219 6.0023-3.0294a.077.077 0 00.0313-.0552c.5004-5.177-.8382-9.6739-3.5485-13.6604a.061.061 0 00-.0312-.0286zM8.02 15.3312c-1.1825 0-2.1569-1.0857-2.1569-2.419 0-1.3332.9555-2.4189 2.157-2.4189 1.2108 0 2.1757 1.0952 2.1568 2.419 0 1.3332-.9555 2.4189-2.1569 2.4189zm7.9748 0c-1.1825 0-2.1569-1.0857-2.1569-2.419 0-1.3332.9554-2.4189 2.1569-2.4189 1.2108 0 2.1757 1.0952 2.1568 2.419 0 1.3332-.946 2.4189-2.1568 2.4189Z"/>`)],
  chrome: ['0 0 60 60', `<rect width="60" height="60" rx="14" fill="#fafafa"/><g><circle cx="30" cy="30" r="26" fill="#fbc116"/><path d="M7.480 17A26 26 0 0 1 52.520 17H30a13 13 0 0 0-11.260 19.500z" fill="#e33b2e"/><path d="M7.480 17A26 26 0 0 0 30 56l11.260-19.500a13 13 0 0 1-22.520 0z" fill="#2da94f"/><circle cx="30" cy="30" r="13" fill="#fff"/><circle cx="30" cy="30" r="10.300" fill="#2a7cf0"/></g>`],
  telegram: ['0 0 60 60', tile('#40b0e8', '#1c8ce8', `<path d="m9 31 36-15q4-1 3 3l-6 26q-1 4-4 2l-9-7-5 5q-2 1-2-1v-8l17-16-21 14-9-3z" fill="#fff"/>`)],
  monitor: ['0 0 60 60', `<defs>${lg('t', '#d8e4ea', '#7a7a76')}</defs><rect width="60" height="60" rx="14" fill="url(#t)"/><rect x="2.500" y="2.500" width="55" height="55" rx="11.500" fill="#000"/><rect x="7" y="6.500" width="46" height="47" rx="6" fill="#15211f"/><path d="M7 17h46M7 29h46M7 41h46M19 7v46M30 7v46M41 7v46" stroke="#2c4a44" stroke-width="1"/><path d="M7 32h7l3 2 2-21 2 28 3-9 4 2h6l3-3 3-4 4 7 3-4h6" fill="none" stroke="#4fb59c" stroke-width="1.300"/>`],
  viber: ['0 0 60 60', tile('#7a60f4', '#6c4cec', `<path d="M22 9h17c9 0 13 5 13 14v6c0 9-4 13-13 14h-9l-9 9v-10c-8-1-12-5-12-13v-6C9 14 13 9 22 9z" fill="none" stroke="#fff" stroke-width="3.200"/><path d="${PHONE}" transform="translate(7.500 6) scale(1.350)" fill="#fff"/><path d="M31 16c7 1 11 5 11 12M31 21c4 .6 6 3 6 7" fill="none" stroke="#fff" stroke-width="1.600"/>`)],
  vscode: ['0 0 60 60', `<rect width="60" height="60" rx="14" fill="#fff"/><path d="m9 38 30-28 2 10-27 22z" fill="#0a62ac"/><path d="m9 22 5-3 27 20-2 12z" fill="#1080d4"/><path d="m38 9 12 5v32l-12 6 3-3V12z" fill="#2aa0f4"/>`],
  bin: ['0 0 54 66', `<defs>${lg('t', '#cfc8e0', '#f0f0f2')}</defs><path d="M1 7 8 60q1 5 8 5h22q7 0 8-5l7-53z" fill="url(#t)"/><path d="M10 12 15 60M44 12l-5 48" stroke="#fff" stroke-width="2" opacity=".35"/><ellipse cx="27" cy="7" rx="26" ry="6.500" fill="#b4a4cc" stroke="#e8e4f0" stroke-width="1.500"/>`],
};

define('ui-icon', ':host{display:block;flex:none}svg{display:block;overflow:visible}', el => {
  const [vb, m] = ICONS[el.getAttribute('name')];
  return `<svg width="${el.getAttribute('w')}" height="${el.getAttribute('h')}" viewBox="${vb}" preserveAspectRatio="none">${m}</svg>`;
});

/* One line of text, tracked so that it fills the width it is given. */
define('ui-text', ':host{display:block;flex:none;white-space:nowrap;line-height:1.36}span{display:inline-block;white-space:pre}', '<span><slot></slot></span>', el => {
  const w = +el.getAttribute('w'), s = el.shadowRoot.querySelector('span');
  el.style.fontSize = el.getAttribute('size') + 'px';
  el.style.letterSpacing = '0';
  const n = el.textContent.length, natural = s.getBoundingClientRect().width;
  if (w && n > 1) el.style.letterSpacing = ((w - natural) / (n - 1)).toFixed(3) + 'px';
  el.style.width = w + 'px';
});

/* ---------- macOS ---------- */
define('mac-menubar', `:host{height:48px;padding-bottom:2px;display:flex;align-items:center;background:linear-gradient(90deg,#9926b4 0,#a540bb 900px,#ac4bbf 1400px,#ab47bc 2000px,#a02db0 2880px);color:#f3eaf6;font-family:${SYS};text-shadow:0 2px 5px rgba(60,0,80,.35)}ui-text{font-weight:500}`,
  row(0, [
    [39, 28, I('apple', 28, 32, 'margin-bottom:2px')],
    [105.500, 101, T('Chrome', 101, 25, 'font-weight:700')], [248, 42, T('File', 42, 25)], [332.500, 45, T('Edit', 45, 25)], [421, 56, T('View', 56, 25)],
    [520.500, 85, T('History', 85, 25)], [648.500, 133, T('Bookmarks', 133, 25)], [824, 91, T('Profiles', 91, 25)], [957, 43, T('Tab', 43, 25)],
    [1041, 96, T('Window', 96, 25)], [1177.500, 55, T('Help', 55, 25)],
    [1914, 32, I('mviber', 32)], [1989, 38, I('mtg', 38, 34, 'margin-top:9px')], [2063, 26, I('mplay', 26, 26, 'margin-top:3px')], [2130, 32, I('minput', 32)],
    [2209, 26, I('mmoon', 26)], [2276, 52, I('mbattery', 52, 26)], [2364, 33, I('mwifi', 33, 24)], [2435, 26, I('msearch', 26, 25)], [2498, 28, I('mcontrol', 28, 26, 'margin-top:3px')],
    [2560, 28, I('msiri', 28)], [2620, 135, T('Sun 19 Jan', 135, 25)], [2774, 68, T('17:54', 68, 25)],
  ]));

define('dock-app', `:host{flex:none;width:60px;height:96px;padding-top:15px;position:relative}
  .dot{width:8px;height:8px;border-radius:50%;background:#080420;margin:9px auto 0}
  .badge{position:absolute;top:2px;height:28px;border-radius:14px;background:#f4303c;color:#fff;display:flex;align-items:center;justify-content:center;font-family:${SYS}}`,
  el => I(el.getAttribute('icon'), 60) + (el.hasAttribute('running') ? '<div class="dot"></div>' : '') +
    (el.hasAttribute('badge') ? `<div class="badge" style="left:${el.getAttribute('bx')}px;width:${el.getAttribute('bw')}px">${T(el.getAttribute('badge'), el.getAttribute('tw'), 15.500)}</div>` : ''));

define('mac-dock', `:host{display:flex;width:2422px;height:96px;margin-left:229px;padding-left:12px;gap:18px;border-radius:34px;border:2px solid rgba(255,255,255,.22);align-items:flex-start;
  background:linear-gradient(90deg,#5c5078 0,#5c5078 500px,#63559a 900px,#6b55a6 1350px,#7c55ac 1550px,#9655bc 1680px,#9a55c0 1900px,#8452b2 2130px,#7350a4 2422px)}
  dock-app{margin-top:-2px}.sep{width:2px;height:72px;margin:10px 7px 0 9px;background:#5c2a8c;flex:none}`,
  (() => { const a = (i, r, x = '') => `<dock-app icon="${i}" ${r ? 'running' : ''} ${x}></dock-app>`;
    return a('finder', 1) + a('siri') + a('launchpad') + a('mail', 1, 'badge="25 100" bx="15" bw="52" tw="44"') + a('contacts') + a('calendar') + a('notes', 1) +
      ['reminders', 'maps', 'photos', 'messages', 'facetime', 'numbers', 'pages', 'keynote', 'music', 'podcasts', 'tv', 'books', 'appstore', 'settings'].map(n => a(n)).join('') +
      '<div class="sep"></div>' + a('terminal', 1) + a('sublime', 1) + a('discord', 1) + a('chrome', 1) + a('telegram', 1, 'badge="..75" bx="37" bw="31" tw="23"') +
      a('monitor', 1) + a('viber', 1, 'badge="23" bx="41" bw="28" tw="17"') + a('vscode', 1) + '<div class="sep"></div>' + I('bin', 54, 65, 'margin-top:11px'); })());

define('mac-desktop', `:host{width:2880px;height:1800px;display:flex;flex-direction:column;background:linear-gradient(90deg,#050014 0,#0a0030 700px,#14004c 1100px,#1c0064 1400px,#22006c 1800px,#5a0090 1900px,#44007c 2200px,#26005c 2640px,#1b0050 2880px)}
  .back{margin-top:2px;height:1642px;border-radius:20px 20px 30px 0;overflow:hidden;background:linear-gradient(#2a2a2c 0,#2a2a2c 174px,#c4c4c4 174px)}
  mac-dock{margin-top:2px}`,
  '<mac-menubar></mac-menubar><div class="back"><chrome-window></chrome-window></div><mac-dock></mac-dock>');

/* ---------- browser ---------- */
define('chrome-tab', `:host{flex:none;width:272.800px;height:78px;display:flex;align-items:center;color:#c7c7c7;font-family:${SYS};position:relative}
  .in{display:flex;align-items:center;width:100%;height:100%;padding:0 0 1px 22px}
  .clip{width:132px;margin-left:15px;-webkit-mask-image:linear-gradient(90deg,#000 84px,transparent 132px)}
  .full{-webkit-mask-image:none}
  .close{margin-left:25px;color:#d0d0d0}
  .sep{margin-left:auto;width:3px;height:32px;border-radius:2px;background:#3f4140}
  :host([active]){color:#e6e6e6}
  :host([active]) .in{width:261px;height:68px;margin:10px 0 0 5px;padding:0 0 10px 15px;background:#3c3c3c;border-radius:20px 20px 0 0}
  :host([active]) .in::before,:host([active]) .in::after{content:"";position:absolute;bottom:0;width:22px;height:22px}
  :host([active]) .in::before{left:-17px;background:radial-gradient(circle at 0 0,transparent 21.500px,#3c3c3c 22px)}
  :host([active]) .in::after{left:266px;background:radial-gradient(circle at 100% 0,transparent 21.500px,#3c3c3c 22px)}`,
  el => `<div class="in">${I(el.getAttribute('icon'), 32, 32, el.getAttribute('icon') === 'globe' ? 'transform:scale(.93)' : '')}<div class="clip ${el.hasAttribute('whole') ? 'full' : ''}">${T(el.getAttribute('label'), el.getAttribute('tw'), 23.500)}</div><div class="close">${I('close', 18)}</div>${el.hasAttribute('active') ? '' : '<div class="sep"></div>'}</div>`);

define('chrome-tabs', `:host{height:78px;display:flex;align-items:center;background:#202221;padding-left:42px;color:#d0d0d0}
  .light{width:24px;height:24px;border-radius:50%;margin-right:16px;flex:none}
  chrome-tab:first-of-type{margin-left:18px}.new{margin-left:24px;padding-bottom:1px}
  .drop{margin-left:126px;width:56px;height:56px;border-radius:18px;background:#3c3c3c;display:flex;align-items:center;justify-content:center;color:#e3e3e3}`,
  `<div class="light" style="background:#fe5a56"></div><div class="light" style="background:#fdbc2e"></div><div class="light" style="background:#33ce44"></div>` +
  [['azure', 'DmytoOlsha', 137, 'active'], ['globe', 'Welcome', 103, 'whole'], ['google', 'basic - Пош', 137], ['gpt', 'ChatGPT', 101, 'whole'], ['stack', 'python - Fla', 134],
   ['stack', 'python - Ho', 135], ['fcc', 'Python Env', 128], ['globe', 'Welcome', 103, 'whole'], ['google', 'azure clone', 130]]
    .map(([i, l, w, x = '']) => `<chrome-tab icon="${i}" label="${l}" tw="${w}" ${x}></chrome-tab>`).join('') +
  `<div class="new">${I('plus', 20)}</div><div class="drop">${I('down', 16, 10)}</div>`);

define('chrome-toolbar', `:host{height:94px;display:flex;align-items:center;background:#3c3c3c;border-bottom:2px solid #484848;color:#c7c7c7;font-family:${SYS}}
  .omni{display:flex;align-items:center;width:1916px;height:68px;border-radius:34px;background:#282828}
  .site{width:48px;height:48px;border-radius:50%;background:#3c3c3c;display:flex;align-items:center;justify-content:center}
  .pill{display:flex;align-items:center;height:68px;border-radius:34px}b{font-weight:400;color:#e8e8e8}ui-text{margin-top:1.500px}`,
  row(0, [
    [32, 24, I('back', 24, 24)], [104, 24, I('fwd', 24, 24, 'color:#7c7c7c')], [175, 26, I('reload', 26)],
    [240, 1916, `<div class="omni">${row(0, [[10, 48, `<div class="site">${I('tune', 26)}</div>`],
      [74, 1675, T('<b>portal.azure.com</b>/#@dmytroslotvinskyygmail.onmicrosoft.com/resource/subscriptions/9a6ae428-d8c3-44fe-bdf2-4e085939…', 1675, 27.500)],
      [1785, 38, I('eyeoff', 38, 30)], [1852, 32, I('bmstar', 32)]])}</div>`],
    [2193, 31, I('queue', 31, 24)], [2264, 32, I('download', 32, 31)],
    [2324, 210, `<div class="pill" style="width:210px;background:#282828;color:#e8e8e8">${row(0, [[26, 28, I('incognito', 28)], [71, 114, T('Incognito', 114, 26)]])}</div>`],
    [2544, 318, `<div class="pill" style="width:318px;background:#044a78;color:#c2e7ff">${row(0, [[23.500, 237, T('Relaunch to update', 237, 26)], [282, 8, I('dots', 8, 30)]])}</div>`],
  ]));

define('chrome-window', `:host{display:flex;flex-direction:column;width:2874px;height:1642px;border-top:2px solid #868686;border-radius:20px 20px 26px 0;overflow:hidden;position:relative;background:#202221}
  azure-portal{flex:1}
  chrome-toolbar{border-radius:16px 16px 0 0}
  .status{position:absolute;left:0;bottom:0;width:2815px;height:41px;padding:1px 0 0 9px;display:flex;align-items:center;background:#1f2120;color:#bdbdbd;font-family:${SYS};border-top-right-radius:10px;box-shadow:0 0 30px 2px rgba(0,0,0,.3)}`,
  `<chrome-tabs></chrome-tabs><chrome-toolbar></chrome-toolbar><azure-portal></azure-portal>
  <div class="status">${T('https://portal.azure.com/#@dmytroslotvinskyygmail.onmicrosoft.com/resource/subscriptions/9a6ae428-d8c3-44fe-bdf2-4e08593901a0/resourceGroups/DmytroOlshanskyi/providers/Microsoft.Network/loadBalancers/DmytoOlshanskyiBasicLB/b…', 2788, 24)}</div>`);

/* ---------- Azure portal ---------- */
define('azure-header', `:host{height:80px;display:flex;align-items:center;background:#0c74d6;color:#fff}
  .search{display:flex;align-items:center;width:1040px;height:52px;border-radius:4px;background:#b4d6f3;color:#1a5396}
  .copilot{display:flex;align-items:center;width:178px;height:52px;border-radius:6px;background:#fff;color:#243a5e}
  .bell{position:relative;width:26px}.count{position:absolute;left:11px;top:-16px;width:32px;height:32px;border-radius:50%;background:#fff;color:#0c6cc8;display:flex;align-items:center;justify-content:center}
  .who{display:flex;flex-direction:column;padding-top:3px}`,
  row(0, [
    [34, 28, I('burger', 28, 18)], [135, 219, T('Microsoft Azure', 219, 28.500, 'font-weight:600;margin-top:1px')],
    [753.500, 1040, `<div class="search">${row(0, [[16, 25, I('search', 25)], [60, 480, T('Search resources, services, and docs (G+/)', 480, 25)]])}</div>`],
    [1826, 178, `<div class="copilot">${row(0, [[25, 31, I('copilot', 31, 28)], [65, 87, T('Copilot', 87, 25.500, 'font-weight:600')]])}</div>`],
    [2057, 33, I('shell', 33, 28)], [2141, 26, `<div class="bell">${I('bell', 26, 28)}<div class="count">${T('14', 20, 20)}</div></div>`],
    [2218, 32, I('gear', 32)], [2298, 32, I('help', 32)], [2378, 32, I('feedback', 32)],
    [2473, 316, `<div class="who">${T('DmytroOlshanskyi@dm...', 314, 27, 'line-height:34px;margin-top:-1px')}${T('DEFAULT DIRECTORY (DMYTROS...', 316, 19, 'font-weight:600;line-height:26px;margin-top:1px')}</div>`],
    [2806, 56, I('avatar', 56)],
  ]));

define('azure-breadcrumb', ':host{height:74px;display:flex;align-items:center;color:#0b6fd6}',
  row(0, [[39.500, 75.500, T('Home', 75.500, 26)], [132, 10, I('crumb', 10, 20)], [158, 208, T('Resource groups', 208, 26)], [383, 10, I('crumb', 10, 20)],
    [409.500, 225.500, T('DmytroOlshanskyi', 225.500, 26)], [651, 10, I('crumb', 10, 20)], [678.500, 307, T('DmytoOlshanskyiBasicLB', 307, 26)]]));

define('blade-title', `:host{height:106px;display:flex;padding-left:41px}
  .txt{margin-left:20px;margin-top:-2px;width:890px}.line{display:flex;align-items:center;height:64px;color:#242424}.line ui-text{margin-top:-3px}.sub{color:#605e5c}
  .pic{margin-top:19px}`,
  `<div class="pic">${I('pool', 54)}</div><div class="txt"><div class="line">${row(115, [[115, 544, T('DmytoOlshanskyiBasicLB', 544, 45.500, 'font-weight:600')], [677, 4, '<div style="width:4px;height:44px;background:#323130"></div>'], [696, 309, T('Backend pools', 309, 45.500)],
    [1055, 28, I('favstar', 28, 28, 'color:#323130')], [1121, 24, I('more', 24, 6)], [2790, 24, I('x', 24)]])}</div><div class="sub">${T('Load balancer', 149, 23)}</div></div>`);

define('nav-item', `:host{height:64px;display:flex;align-items:center;color:#292827;padding-left:40px}
  :host([sub]){padding-left:88px}.slot{width:32px;display:flex;justify-content:center}
  ui-text{margin:2px 0 0 15px}
  .pic{margin-top:3px}
  .grp{margin-top:0}
  :host([selected]){background:#e1dfdd;border-left:4px solid #0b6fd6;padding-left:84px}
  :host([selected]) ui-text{font-weight:600}.fav{margin:2px 0 0 158px;color:#0a55e0}`,
  el => { const n = el.getAttribute('icon'), grp = n.startsWith('chev'); const [w, h] = { chevD: [24, 13], chevR: [13, 24], frontend: [31, 25], lbrules: [32, 27], pool: [31, 30] }[n] || [32, 32];
    return `<div class="slot ${grp ? '' : 'pic'}">${I(n, w, h)}</div>${T(el.textContent, +el.getAttribute('tw') + 2, 25.200, grp ? 'margin-top:0.500px' : '')}${el.hasAttribute('selected') ? `<div class="fav">${I('favstar', 24, 26, 'transform:scale(1.05)')}</div>` : ''}`; });

define('side-nav', `:host{width:530px;flex:none;padding-top:18px}
  .top{display:flex;align-items:center}.box{display:flex;align-items:center;width:374px;height:48px;border:2px solid #8a8886;border-radius:4px;color:#605e5c}
  nav{margin-top:14px}`,
  `<div class="top">${row(0, [[32, 374, `<div class="box">${row(2, [[12, 25, I('search', 25, 25, 'color:#0b6fd6')], [49, 78, T('Search', 78, 25, 'margin-top:-1px')]])}</div>`], [431, 14, I('sort', 13, 17)], [489, 18, I('collapse', 17, 16)]])}</div><nav>` +
  [['overview', 'Overview', 105], ['activity', 'Activity log', 127], ['iam', 'Access control (IAM)', 234], ['tags', 'Tags', 52], ['diagnose', 'Diagnose and solve problems', 338], ['chevD', 'Settings', 91],
   ['frontend', 'Frontend IP configuration', 292, 'sub'], ['pool', 'Backend pools', 171, 'sub selected'], ['probes', 'Health probes', 160, 'sub'], ['lbrules', 'Load balancing rules', 234, 'sub'],
   ['nat', 'Inbound NAT rules', 214, 'sub'], ['outbound', 'Outbound rules', 179, 'sub'], ['props', 'Properties', 115, 'sub'], ['lock', 'Locks', 62, 'sub'],
   ['chevR', 'Monitoring', 127], ['chevR', 'Automation', 135], ['chevR', 'Help', 52]]
    .map(([i, l, w, x = '']) => `<nav-item icon="${i}" tw="${w}" ${x}>${l}</nav-item>`).join('') + '</nav>');

define('pool-table', `:host{margin-top:62px;margin-left:40px;width:2264px;color:#242424}
  .r{display:grid;grid-template-columns:96px repeat(8,283px);align-items:center;overflow:hidden}
  .r>*{min-width:0}
  .head{height:88px;border-bottom:2px solid #e1dfdd;font-weight:600}.chev{padding-left:24px}
  .group{display:flex;align-items:center;height:95px;padding-top:2px;color:#0b6fd6;font-weight:600}
  .data{height:88px;padding-top:20px;border-bottom:2px solid #e6e6e6;font-weight:600}
  .track{height:29px;background:#fafafa;border-bottom:2px solid #e9e9e9;padding:7px 6px}
  .thumb{width:2182px;height:16px;border-radius:8px;background:#c1c1c1}`,
  `<div class="r head"><div class="chev">${I('chevD', 24, 13)}</div>${[['Backend pool', 160], ['Resource Name', 184], ['IP address', 120], ['Network interface', 212], ['Availability zone', 193], ['Rules count', 138], ['Resource Status', 186], ['Admin state', 142]].map(([t, w]) => T(t, w, 25)).join('')}</div>
  <div class="group">${row(0, [[24, 24, I('chevD', 24, 13)], [96, 467, T('DmytoOlshanskyiBakendPool (1)', 467, 30.500)], [602, 26, I('trash', 26, 32)]])}</div>
  <div class="r data"><div></div>${T('DmytoOlshanskyiBake', 261, 25)}${['-', '-', '-', '-', '1', '-'].map(t => T(t, 20, 25)).join('')}${T('-', 20, 22, 'color:#8a8886;font-weight:400;margin-top:-22px')}</div>
  <div class="track"><div class="thumb"></div></div>`);

define('pool-blade', `:host{flex:1;display:flex;flex-direction:column;min-width:0}
  .cmd{height:140px;display:flex;align-items:center;margin:0 40px;border-bottom:2px solid #f3f2f1;color:#242424;padding-top:-2px}
  .desc{margin:64px 0 0 40px;color:#292827}.desc div{display:flex;align-items:center;height:35px}
  .tools{display:flex;margin:39px 0 0 40px;align-items:flex-start}
  .box{width:450px;height:64px;border:2px solid #8a8886;border-radius:4px;display:flex;align-items:center;padding-left:24px;color:#0b6fd6}
  .pill{margin-left:20px;width:199px;height:48px;border-radius:24px;background:#e5f1fb;display:flex;align-items:center;color:#323130}
  .gap{flex:1}.foot{height:149px;border-top:2px solid #d2d0ce;display:flex;justify-content:flex-end;padding:41px 40px 0 0;color:#0b6fd6;align-items:flex-start}`,
  `<div class="cmd">${row(570, [[634, 32, I('add', 32)], [682, 47, T('Add', 47, 25)], [761, 33, I('refresh', 33, 32)], [809.500, 84, T('Refresh', 84, 25)]])}</div>
  <div class="desc"><div>${T('The backend pool is a critical component of the load balancer. The backend pool defines the group of resources that will', 1373, 25)}</div>
  <div>${T('serve traffic for a given load-balancing rule.', 497, 25)}${T('Learn more.', 136, 25, 'color:#0b6fd6;margin-left:9px')}${I('ext', 22, 20, 'margin-left:10px')}</div></div>
  <div class="tools"><div class="box">${I('search', 32)}</div><div class="pill">${row(0, [[20, 30, I('filter', 30, 26)], [73.500, 107, T('Add filter', 107, 25)]])}</div></div>
  <pool-table></pool-table><div class="gap"></div>
  <div class="foot">${I('feedback', 27, 26, 'margin-top:2px')}${T('Give feedback', 162, 25, 'margin-left:14px')}</div>`);

define('azure-portal', `:host{background:#fff;font-family:${SANS};display:flex;flex-direction:column}.split{flex:1;display:flex}`,
  '<azure-header></azure-header><azure-breadcrumb></azure-breadcrumb><blade-title></blade-title><div class="split"><side-nav></side-nav><pool-blade></pool-blade></div>');
</script>
</body>
</html>
